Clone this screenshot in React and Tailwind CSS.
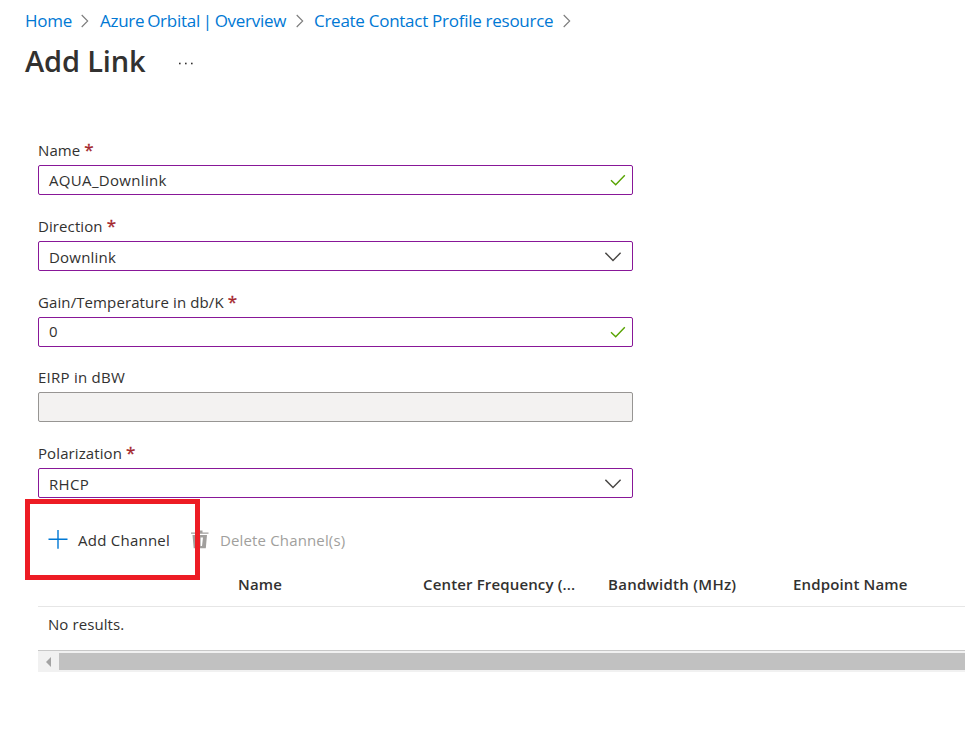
function Chevron() {
  return (
    <svg className="h-[14px] w-[8px] shrink-0" viewBox="0 0 8 14" fill="none" stroke="#7c7c7c" strokeWidth="1.1">
      <path d="M0.7 1L6.7 7L0.7 13" />
    </svg>
  );
}

function Check() {
  return (
    <svg className="mr-[6px] h-[12px] w-[16px]" viewBox="0 0 16 12" fill="none" stroke="#57a300" strokeWidth="1.4">
      <path d="M1 6.2L5.7 10.7L14.8 1.2" />
    </svg>
  );
}

function Down() {
  return (
    <svg className="mt-[2px] mr-[10px] h-[10px] w-[17px]" viewBox="0 0 17 10" fill="none" stroke="#484644" strokeWidth="1.4">
      <path d="M0.4 0.8L8 8.5L15.6 0.8" />
    </svg>
  );
}

function Field({ label, required, value, valueClass, icon, disabled, className }) {
  return (
    <div className={className}>
      <div className="flex h-[20px] items-center gap-[4px] pb-[2px] leading-[20px]">
        <span className={disabled ? "tracking-[0.25px]" : "tracking-[0.1px]"}>{label}</span>
        {required && <span className="text-[17px] text-[#a4262c] [-webkit-text-stroke:0.3px_#a4262c]">*</span>}
      </div>
      <div
        className={
          "mt-[4px] flex h-[30px] w-[595px] items-center justify-between rounded-[2px] border pl-[10px] " +
          (disabled ? "border-[#979593] bg-[#f3f2f1]" : "border-[#881798] bg-white")
        }
      >
        <span className={"leading-[20px] " + (valueClass || "")}>{value}</span>
        {icon}
      </div>
    </div>
  );
}

export default function App() {
  return (
    <div className="h-[743px] w-[965px] overflow-hidden bg-white font-['Open_Sans','Noto_Sans',sans-serif] text-[15px] tracking-[0.15px] text-[#323130]">
      <nav className="flex h-[42px] items-center pl-[25px] text-[17px] tracking-[-0.27px] whitespace-nowrap text-[#0078d4]">
        <span className="w-[56px]">Home</span>
        <Chevron />
        <span className="ml-[11px] w-[196px] [word-spacing:-1.3px]">Azure Orbital | Overview</span>
        <Chevron />
        <span className="ml-[10px] w-[249px]">Create Contact Profile resource</span>
        <Chevron />
      </nav>

      <header className="flex h-[40px] items-center pl-[25px]">
        <h1 className="mt-[-2px] w-[153px] text-[29px] leading-[40px] font-semibold tracking-[-0.15px] whitespace-nowrap">Add Link</h1>
        <svg className="mt-[2px] h-[3px] w-[15px]" viewBox="0 0 15 3" fill="#323130">
          <rect x="1" y="0.7" width="1.6" height="1.6" />
          <rect x="7" y="0.7" width="1.6" height="1.6" />
          <rect x="13" y="0.7" width="1.6" height="1.6" />
        </svg>
      </header>

      <main className="pt-[59px] pl-[38px]">
        <Field label="Name" required value="AQUA_Downlink" valueClass="pb-[1px] tracking-[0.33px]" icon={<Check />} />
        <Field className="mt-[22px]" label="Direction" required value="Downlink" valueClass="pt-[2px] tracking-[0.2px]" icon={<Down />} />
        <Field className="mt-[22px]" label="Gain/Temperature in db/K" required value="0" valueClass="pb-[2px]" icon={<Check />} />
        <Field className="mt-[21px]" label="EIRP in dBW" disabled />
        <Field className="mt-[22px]" label="Polarization" required value="RHCP" valueClass="pt-[2px] tracking-[0.3px]" icon={<Down />} />

        <div className="relative flex h-[64px] items-center pt-[20px]">
          <div className="absolute top-[1px] left-[-13px] z-10 h-[81px] w-[175px] border-[5px] border-[#ed1c24]" />
          <svg className="ml-[10px] h-[20px] w-[20px]" viewBox="0 0 20 20" stroke="#0078d4" strokeWidth="1.4">
            <path d="M10 0V18.8M0.5 9.3H19.5" />
          </svg>
          <span className="ml-[10px] w-[113px] pt-[1px] tracking-[0.25px] whitespace-nowrap">Add Channel</span>
          <svg className="h-[20px] w-[18px]" viewBox="0 0 18 20" fill="#a19f9d">
            <path d="M0 2.6H6V0.6H11.5V2.6H17.5V3.8H0Z" />
            <path fillRule="evenodd" d="M1.5 5H16L14.8 18.3H2.7ZM5 7.5L5.8 16H7.2V7.5ZM9.6 7.5V16H11L12 7.5Z" />
          </svg>
          <span className="ml-[11px] pt-[1px] whitespace-nowrap text-[#a19f9d]">Delete Channel(s)</span>
        </div>

        <div className="grid h-[45px] grid-cols-[200px_185px_185px_185px_172px] items-center border-b border-[#e6e6e6] pt-[1px] font-semibold whitespace-nowrap">
          <span />
          <span>Name</span>
          <span>Center Frequency (...</span>
          <span className="tracking-[0.27px]">Bandwidth (MHz)</span>
          <span>Endpoint Name</span>
        </div>
        <div className="flex h-[43px] items-center pb-[9px] pl-[10px] tracking-[0.08px]">No results.</div>
        <div className="flex h-[22px] items-center border-t border-[#c8c8c8] bg-[#f1f1f1]">
          <svg className="ml-[8px] h-[10px] w-[5px]" viewBox="0 0 5 10" fill="#a3a3a3">
            <path d="M5 0V10L0 5Z" />
          </svg>
          <div className="ml-[8px] h-[17px] flex-1 bg-[#c1c1c1]" />
        </div>
      </main>
    </div>
  );
}
